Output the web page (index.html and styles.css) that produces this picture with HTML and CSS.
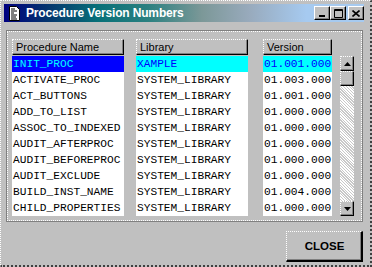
FILE: index.html
```html
<!DOCTYPE html>
<html lang="en">
<head>
    <meta charset="UTF-8">
    <title>Procedure Version Numbers</title>
    <link rel="stylesheet" href="styles.css">
</head>
<body>
    <div class="window">
        <div class="titlebar">
            <svg class="app-icon" width="13" height="15" viewBox="0 0 13 15">
                <path d="M1.5 0.5h7l3 3v11h-10z" fill="#fff" stroke="#000"/>
                <path d="M3 3h4M3 5h6M3 7h3M3 9h6M3 11h5M3 13h6" stroke="#000" stroke-width="1"/>
            </svg>
            <span class="title">Procedure Version Numbers</span>
            <div class="caption-buttons">
                <div class="cap-btn">
                    <svg width="8" height="8" viewBox="0 0 8 8"><rect x="1" y="6" width="6" height="2" fill="#000"/></svg>
                </div>
                <div class="cap-btn">
                    <svg width="9" height="9" viewBox="0 0 9 9"><path d="M0.5 0.5h8v8h-8z M0.5 1.5h8" fill="none" stroke="#000"/></svg>
                </div>
                <div class="cap-btn close-x">
                    <svg width="8" height="7" viewBox="0 0 8 7"><path d="M0.5 0.5l7 6M7.5 0.5l-7 6" stroke="#000" stroke-width="1.6"/></svg>
                </div>
            </div>
        </div>

        <div class="panel">
            <div class="column col-name">
                <div class="col-head">Procedure Name</div>
                <div class="list" id="nameList"></div>
            </div>
            <div class="column col-lib">
                <div class="col-head">Library</div>
                <div class="list" id="libList"></div>
            </div>
            <div class="column col-ver">
                <div class="col-head">Version</div>
                <div class="list" id="verList"></div>
            </div>
            <div class="scrollbar">
                <div class="sb-btn">
                    <svg width="7" height="4" viewBox="0 0 7 4"><path d="M3.5 0L7 4H0z" fill="#000"/></svg>
                </div>
                <div class="sb-thumb"></div>
                <div class="sb-track"></div>
                <div class="sb-btn">
                    <svg width="7" height="4" viewBox="0 0 7 4"><path d="M0 0h7L3.5 4z" fill="#000"/></svg>
                </div>
            </div>
        </div>

        <div class="footer">
            <div class="btn-close">CLOSE</div>
        </div>
    </div>

    <script>
        var rows = [
            ['INIT_PROC', 'XAMPLE', '01.001.000'],
            ['ACTIVATE_PROC', 'SYSTEM_LIBRARY', '01.003.000'],
            ['ACT_BUTTONS', 'SYSTEM_LIBRARY', '01.001.000'],
            ['ADD_TO_LIST', 'SYSTEM_LIBRARY', '01.000.000'],
            ['ASSOC_TO_INDEXED', 'SYSTEM_LIBRARY', '01.000.000'],
            ['AUDIT_AFTERPROC', 'SYSTEM_LIBRARY', '01.000.000'],
            ['AUDIT_BEFOREPROC', 'SYSTEM_LIBRARY', '01.000.000'],
            ['AUDIT_EXCLUDE', 'SYSTEM_LIBRARY', '01.000.000'],
            ['BUILD_INST_NAME', 'SYSTEM_LIBRARY', '01.004.000'],
            ['CHILD_PROPERTIES', 'SYSTEM_LIBRARY', '01.000.000']
        ];

        // Fill the three lists, first row is the current record
        var lists = ['nameList', 'libList', 'verList'];
        lists.forEach(function(id, col) {
            var el = document.getElementById(id);
            rows.forEach(function(row, i) {
                var cell = document.createElement('div');
                cell.className = i === 0 ? 'cell current' : 'cell';
                cell.textContent = row[col];
                el.appendChild(cell);
            });
        });
    </script>
</body>
</html>
```

FILE: styles.css
```css
body {
    margin: 0;
    background-color: #c0c0c0;
    font-family: "Liberation Sans", Arial, sans-serif;
}
.window {
    width: 372px;
    height: 267px;
    box-sizing: border-box;
    padding: 3px 0 0 3px;
    border-top: 1px dotted #fff;
    border-left: 1px dotted #fff;
    border-right: 2px dotted #404040;
    border-bottom: 2px dotted #404040;
    margin: 0;
    overflow: hidden;
}
.titlebar {
    width: 360px;
    height: 18px;
    display: flex;
    align-items: center;
    background: linear-gradient(to right, #000080 0%, #04346e 12%, #087078 26%, #2a8080 40%, #7c9898 55%, #98aabc 68%, #a6caf0 84%);
}
.app-icon {
    margin-left: 4px;
    margin-right: 5px;
}
.title {
    color: #fff;
    font-weight: bold;
    font-size: 12px;
    letter-spacing: -0.15px;
}
.caption-buttons {
    margin-left: auto;
    margin-right: 0;
    display: flex;
}
.cap-btn {
    width: 16px;
    height: 14px;
    box-sizing: border-box;
    background-color: #c0c0c0;
    border-top: 1px solid #fff;
    border-left: 1px solid #fff;
    border-right: 1px solid #000;
    border-bottom: 1px solid #000;
    box-shadow: inset -1px -1px 0 #808080;
    display: flex;
    align-items: center;
    justify-content: center;
}
.close-x {
    margin-left: 2px;
}
.panel {
    margin-top: 8px;
    margin-left: 2px;
    width: 357px;
    height: 192px;
    box-sizing: border-box;
    border: 1px solid #808080;
    outline: 1px dotted #fff;
    outline-offset: -2px;
    padding: 8px 0 0 5px;
    display: flex;
}
.column {
    display: flex;
    flex-direction: column;
}
.col-name { width: 112px; margin-right: 12px; }
.col-lib { width: 112px; margin-right: 15px; }
.col-ver { width: 69px; margin-right: 8px; }
.col-head {
    height: 16px;
    box-sizing: border-box;
    border-top: 1px dotted #fff;
    border-left: 1px dotted #fff;
    border-right: 1px solid #000;
    border-bottom: 1px solid #000;
    box-shadow: inset -1px -1px 0 #808080;
    font-size: 11px;
    line-height: 14px;
    padding-left: 3px;
    color: #000;
    margin-bottom: 1px;
}
.list {
    background-color: #fff;
    height: 160px;
}
.cell {
    height: 16px;
    line-height: 16px;
    font-family: "Liberation Mono", "Courier New", monospace;
    font-size: 11.2px;
    padding-left: 1px;
    white-space: nowrap;
    overflow: hidden;
    color: #000;
}
.col-name .cell.current {
    background-color: #0000ff;
    color: #00ffff;
}
.col-lib .cell.current,
.col-ver .cell.current {
    background-color: #00ffff;
    color: #0000ff;
}
.scrollbar {
    width: 14px;
    margin-top: 17px;
    height: 160px;
    display: flex;
    flex-direction: column;
}
.sb-btn, .sb-thumb {
    height: 15px;
    box-sizing: border-box;
    background-color: #c0c0c0;
    border-top: 1px dotted #fff;
    border-left: 1px dotted #fff;
    border-right: 1px solid #000;
    border-bottom: 1px solid #000;
    box-shadow: inset -1px -1px 0 #808080;
    display: flex;
    align-items: center;
    justify-content: center;
}
.sb-track {
    flex: 1;
    background: repeating-linear-gradient(45deg, #fff 0 1px, #c8c8c8 1px 2px);
}
.footer {
    display: flex;
    justify-content: flex-end;
    padding-top: 9px;
    padding-right: 7px;
}
.btn-close {
    width: 77px;
    height: 31px;
    box-sizing: border-box;
    border-top: 1px dotted #fff;
    border-left: 1px dotted #fff;
    border-right: 2px solid #000;
    border-bottom: 2px solid #000;
    box-shadow: inset -1px -1px 0 #808080;
    font-weight: bold;
    font-size: 11.5px;
    display: flex;
    align-items: center;
    justify-content: center;
    padding-left: 1px;
}
```
